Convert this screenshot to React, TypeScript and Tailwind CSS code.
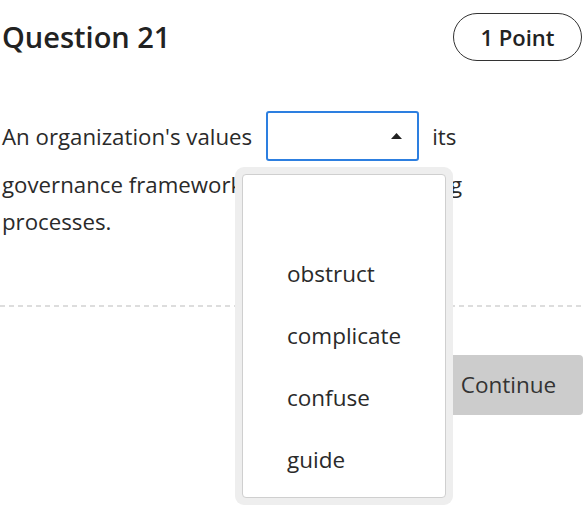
import React from "react";

export default function App() {
  const options = ["", "obstruct", "complicate", "confuse", "guide"];
  return (
    <div className="relative h-[519px] w-[584px] overflow-hidden bg-white font-['Open_Sans',sans-serif] text-[#222222]">
      <div className="flex items-center justify-between pl-[2px] pr-[2px] pt-[13px]">
        <h1 className="text-[29px] font-semibold leading-[48px] text-[#222222]">Question 21</h1>
        <div className="flex h-[48px] w-[129px] items-center justify-center rounded-full border border-[#333333] text-[22px] font-semibold text-[#222222]">
          1 Point
        </div>
      </div>

      <div className="pl-[2px] pt-[50px] text-[22.25px] leading-[37px] text-[#2a2a2a]">
        <div className="flex items-center">
          <span>An organization's values</span>
          <span className="ml-[14px] mr-[13px] flex h-[50px] w-[153px] items-center justify-end rounded-[3px] border-2 border-[#2d7fe0] pr-[15px]">
            <svg width="11" height="6" viewBox="0 0 11 6">
              <path d="M0 6 L5.5 0 L11 6 Z" fill="#222222" />
            </svg>
          </span>
          <span>its</span>
        </div>
        <p className="mt-[5px]">
          governance framework and decision-making
          <br />
          processes.
        </p>
      </div>

      <div className="mt-[65px] h-[2px] w-full bg-[repeating-linear-gradient(90deg,#dddddd_0px,#dddddd_5px,transparent_5px,transparent_9px)]" />

      <div className="mt-[48px] flex justify-end pr-[1px]">
        <button className="h-[60px] w-[149px] rounded-[4px] bg-[#cccccc] text-[22.5px] text-[#333333]">
          Continue
        </button>
      </div>

      <div className="absolute left-[235px] top-[167px] w-[218px] rounded-[9px] bg-[#eeeeee] p-[7px]">
        <ul className="rounded-[4px] border border-[#cfcfcf] bg-white py-[6px]">
          {options.map((o, i) => (
            <li key={i} className="h-[62px] pl-[44px] text-[22.5px] leading-[62px] text-[#2a2a2a]">
              {o}
            </li>
          ))}
        </ul>
      </div>
    </div>
  );
}
